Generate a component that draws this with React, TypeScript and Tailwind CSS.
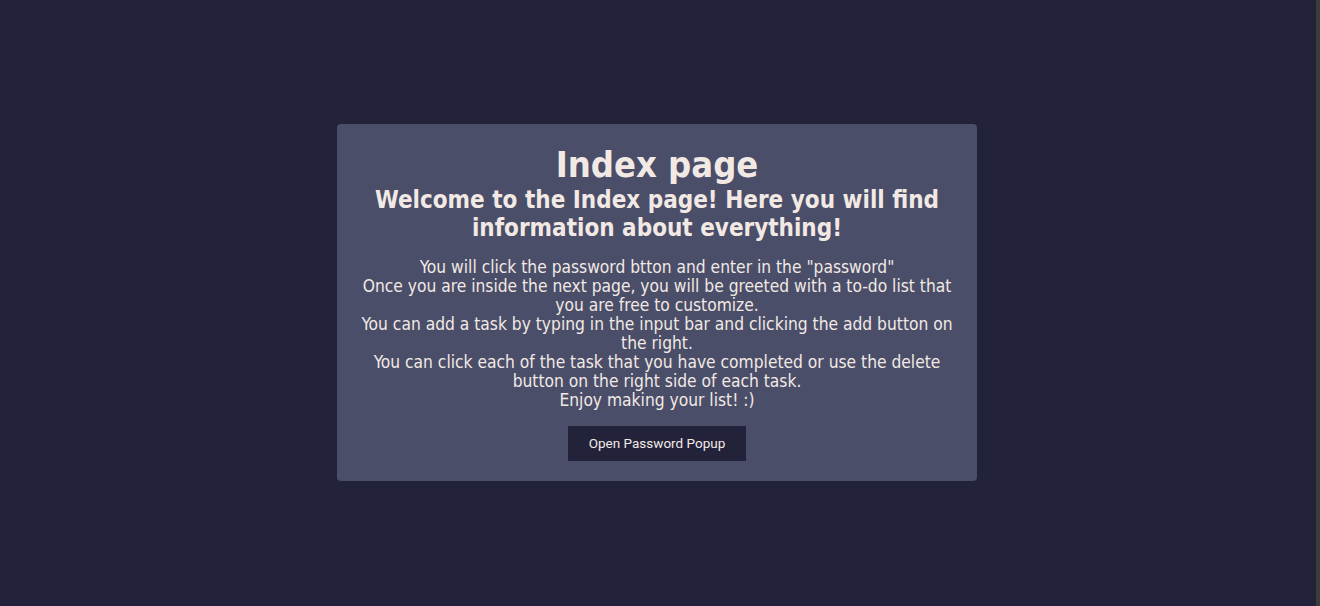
import React from 'react';

const lines = [
  'You will click the password btton and enter in the "password"',
  'Once you are inside the next page, you will be greeted with a to-do list that you are free to customize.',
  'You can add a task by typing in the input bar and clicking the add button on the right.',
  'You can click each of the task that you have completed or use the delete button on the right side of each task.',
  'Enjoy making your list! :)',
];

const App: React.FC = () => {
  return (
    <div className="flex h-[606px] w-full bg-[#22223b]">
      <main className="flex flex-1 items-center justify-center pr-[2px] pb-[1px]">
        <div className="w-[640px] rounded bg-[#4a4e69] px-5 pt-5 pb-5 text-center font-[DejaVu_Sans,sans-serif] font-stretch-condensed text-[#f2e9e4]">
          <h1 className="text-[36px] leading-[41px] font-bold">Index page</h1>
          <h2 className="mt-[1px] text-[24px] leading-[28px] font-bold">
            Welcome to the Index page! Here you will find information about everything!
          </h2>
          <div className="mt-4 text-[17.25px] leading-[19px]">
            {lines.map((line) => (
              <p key={line}>{line}</p>
            ))}
          </div>
          <button className="mt-4 h-[35px] w-[178px] bg-[#22223b] font-[Roboto,Arial,sans-serif] font-stretch-normal text-[13.5px] text-[#f2e9e4]">
            Open Password Popup
          </button>
        </div>
      </main>
      <div className="w-1 bg-[#3c3c3c]" />
    </div>
  );
};

export default App;
